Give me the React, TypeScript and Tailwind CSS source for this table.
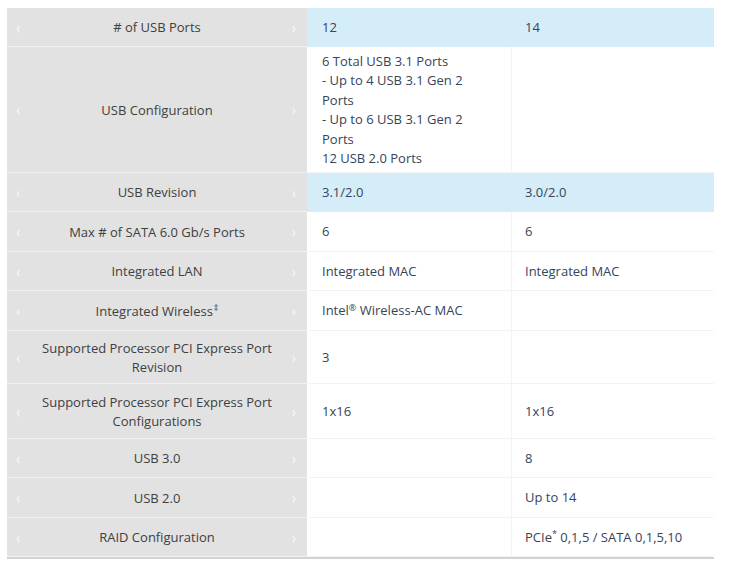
import React from "react";

type Row = {
  label: string[];
  a: string[];
  b: string[];
  h: number;
  blue?: boolean;
};

const rows: Row[] = [
  { label: ["# of USB Ports"], a: ["12"], b: ["14"], h: 39, blue: true },
  {
    label: ["USB Configuration"],
    a: [
      "6 Total USB 3.1 Ports",
      "- Up to 4 USB 3.1 Gen 2",
      "Ports",
      "- Up to 6 USB 3.1 Gen 2",
      "Ports",
      "12 USB 2.0 Ports",
    ],
    b: [],
    h: 126,
  },
  { label: ["USB Revision"], a: ["3.1/2.0"], b: ["3.0/2.0"], h: 39, blue: true },
  { label: ["Max # of SATA 6.0 Gb/s Ports"], a: ["6"], b: ["6"], h: 40 },
  { label: ["Integrated LAN"], a: ["Integrated MAC"], b: ["Integrated MAC"], h: 39 },
  { label: ["Integrated Wireless‡"], a: ["Intel® Wireless-AC MAC"], b: [], h: 40 },
  { label: ["Supported Processor PCI Express Port", "Revision"], a: ["3"], b: [], h: 53 },
  { label: ["Supported Processor PCI Express Port", "Configurations"], a: ["1x16"], b: ["1x16"], h: 55 },
  { label: ["USB 3.0"], a: [], b: ["8"], h: 39 },
  { label: ["USB 2.0"], a: [], b: ["Up to 14"], h: 40 },
  { label: ["RAID Configuration"], a: [], b: ["PCIe* 0,1,5 / SATA 0,1,5,10"], h: 39 },
];

function Label({ text }: { text: string }) {
  if (text.endsWith("‡")) {
    return (
      <>
        {text.slice(0, -1)}
        <sup className="text-[9px] ml-[1px]">‡</sup>
      </>
    );
  }
  return <>{text}</>;
}

function DataText({ text }: { text: string }) {
  const m = text.match(/^(.*?)([®*])(.*)$/);
  if (m) {
    return (
      <>
        {m[1]}
        <sup className="text-[9px]">{m[2] === "*" ? "*" : "®"}</sup>
        {m[3]}
      </>
    );
  }
  return <>{text}</>;
}

export default function App() {
  return (
    <div
      className="w-[730px] h-[562px] bg-white pt-[8px] pl-[7px]"
      style={{ fontFamily: '"Open Sans", "Noto Sans", sans-serif' }}
    >
      <div className="w-[707px] flex flex-col border-b-2 border-[#d2d2d2]">
        {rows.map((r, i) => (
          <div key={i} className="flex" style={{ height: r.h }}>
            <div className="w-[300px] shrink-0 bg-[#e2e2e2] border-b border-[#f2f2f2] flex items-center relative pt-[1px]">
              <span className="absolute left-[9px] text-[14px] text-[#f8f8f8] leading-none">‹</span>
              <div className="flex-1 text-center text-[13px] leading-[19px] text-[#404040]">
                {r.label.map((l, j) => (
                  <div key={j}>
                    <Label text={l} />
                  </div>
                ))}
              </div>
              <span className="absolute right-[11px] text-[14px] text-[#f8f8f8] leading-none">›</span>
            </div>
            <div
              className={`w-[205px] shrink-0 flex items-center pl-[15px] pt-[1px] border-b border-r ${
                r.blue ? "bg-[#d5edf9] border-[#d5edf9]" : "bg-white border-[#f3f3f3]"
              } text-[13px] leading-[19.5px] text-[#36445a]`}
            >
              <div>
                {r.a.map((t, j) => (
                  <div key={j}>
                    <DataText text={t} />
                  </div>
                ))}
              </div>
            </div>
            <div
              className={`flex-1 flex items-center pl-[13px] pt-[1px] border-b ${
                r.blue ? "bg-[#d5edf9] border-[#d5edf9]" : "bg-white border-[#f3f3f3]"
              } text-[13px] leading-[19.5px] text-[#36445a]`}
            >
              <div>
                {r.b.map((t, j) => (
                  <div key={j}>
                    <DataText text={t} />
                  </div>
                ))}
              </div>
            </div>
          </div>
        ))}
      </div>
    </div>
  );
}
